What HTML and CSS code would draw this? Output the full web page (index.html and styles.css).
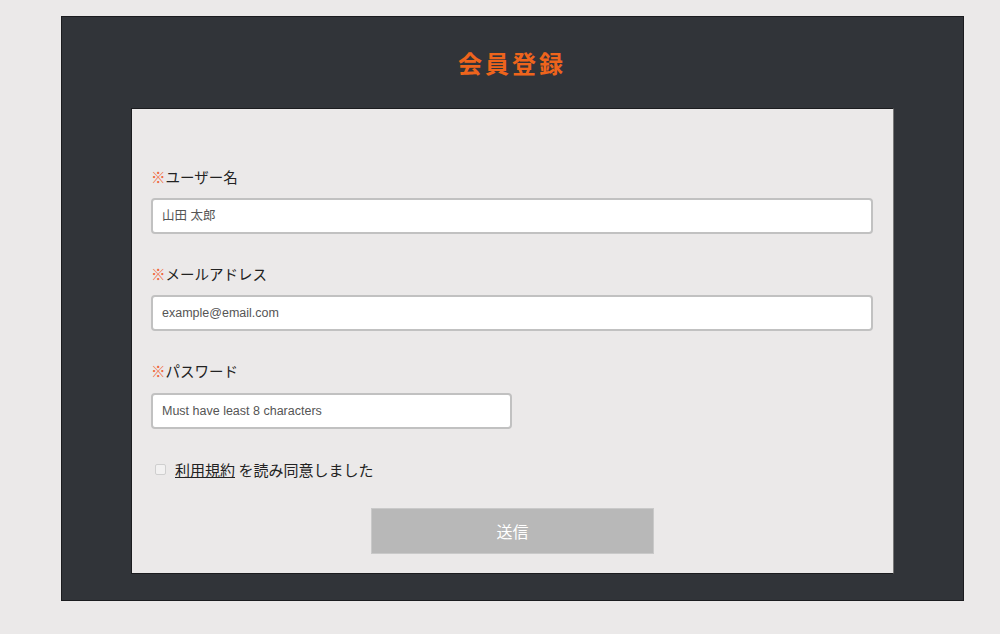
FILE: index.html
```html
<!DOCTYPE html>
<html lang="ja">
<head>
<meta charset="utf-8">
<title>会員登録</title>
<link rel="stylesheet" href="styles.css">
</head>
<body>
<div class="frame">
  <h1 class="title">会員登録</h1>
  <form class="card">
    <label class="label" for="name"><span class="req">※</span>ユーザー名</label>
    <input class="field" id="name" type="text" placeholder="山田 太郎">
    <label class="label" for="mail"><span class="req">※</span>メールアドレス</label>
    <input class="field" id="mail" type="email" placeholder="example@email.com">
    <label class="label" for="pw"><span class="req">※</span>パスワード</label>
    <input class="field short" id="pw" type="password" placeholder="Must have least 8 characters">
    <div class="agree">
      <span class="box"></span>
      <span><a class="terms" href="#">利用規約</a> を読み同意しました</span>
    </div>
    <div class="actions">
      <button class="submit" type="button">送信</button>
    </div>
  </form>
</div>
</body>
</html>
```
FILE: styles.css
```css
* { box-sizing: border-box; }
body {
  margin: 0;
  background: #ebe9e9;
  font-family: "Noto Sans CJK JP", "Liberation Sans", sans-serif;
  color: #222;
}
.frame {
  margin: 16px 0 0 61px;
  width: 903px;
  height: 585px;
  background: #313439;
  border: 1px solid #1b1c1f;
  padding: 0 70px 0 69px;
  display: flex;
  flex-direction: column;
}
.title {
  margin: 0;
  height: 91px;
  display: flex;
  align-items: center;
  justify-content: center;
  font-size: 24px;
  font-weight: 700;
  letter-spacing: 3px;
  color: #ee641c;
}
.card {
  width: 763px;
  height: 466px;
  background: #ebe9e9;
  border: 1px solid #1b1c1f;
  border-right-color: #777;
  padding: 58px 19px 0 19px;
  display: flex;
  flex-direction: column;
}
.label {
  font-size: 14.5px;
  line-height: 20px;
  height: 20px;
  margin-bottom: 11px;
  color: #222;
}
.req { color: #f0663a; }
.field {
  display: block;
  width: 722px;
  height: 36px;
  border: 2px solid #c1c1c1;
  border-radius: 4px;
  background: #fff;
  padding: 0 9px;
  font-family: "Liberation Sans", "Noto Sans CJK JP", sans-serif;
  font-size: 12.5px;
  margin-bottom: 30px;
  outline: none;
}
.field::placeholder { color: #555; }
.short { width: 361px; }
.label[for="pw"] { margin-bottom: 12px; }
.agree {
  display: flex;
  align-items: center;
  height: 20px;
  font-size: 15px;
  color: #222;
  padding-left: 4px;
}
.box {
  width: 11px;
  height: 11px;
  border: 1px solid #cfcfcf;
  border-radius: 2px;
  background: #f2f1f1;
  margin-right: 9px;
}
.terms { color: #222; text-decoration: underline; }
.actions {
  margin-top: 29px;
  display: flex;
  justify-content: center;
}
.submit {
  width: 283px;
  height: 46px;
  background: #b8b8b8;
  border: 1px solid #c9c9c9;
  color: #fff;
  font-family: "Noto Sans CJK JP", sans-serif;
  font-size: 16px;
}
```
